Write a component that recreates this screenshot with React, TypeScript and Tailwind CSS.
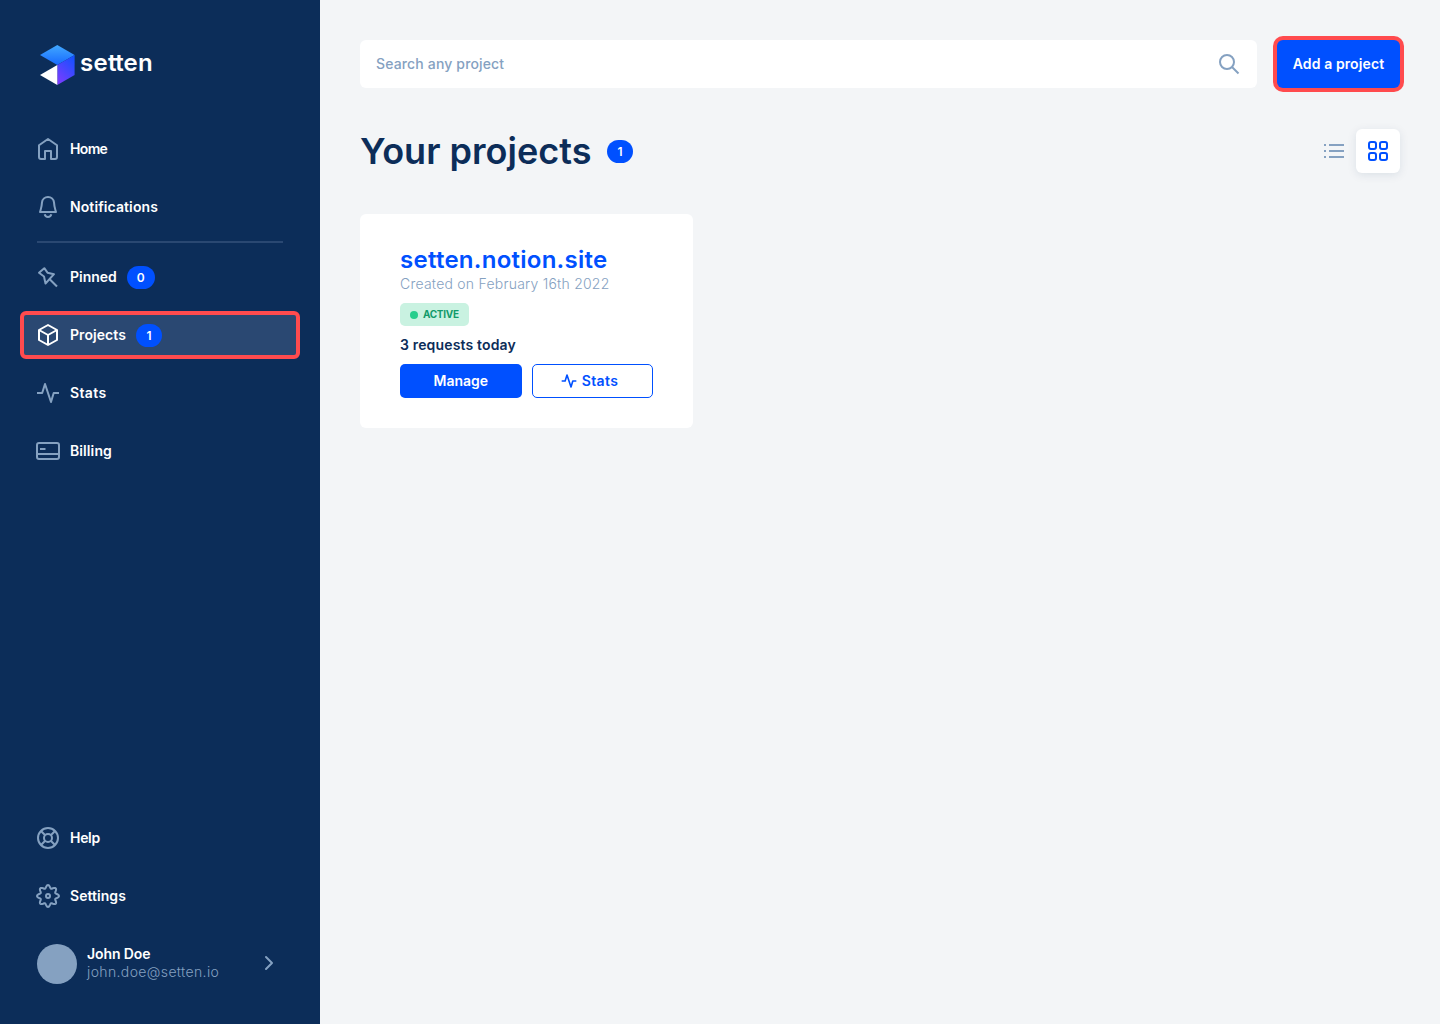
import type { ReactNode } from "react";

type IconProps = { children: ReactNode; className?: string; width?: number };

function Icon({ children, className = "size-6", width = 2 }: IconProps) {
  return (
    <svg
      viewBox="0 0 24 24"
      fill="none"
      stroke="currentColor"
      strokeWidth={width}
      strokeLinejoin="round"
      className={`shrink-0 ${className}`}
    >
      {children}
    </svg>
  );
}

// Outline of an eight-lobed cog, centred in a 24 unit box.
const cogOutline = Array.from({ length: 144 }, (_, i) => {
  const angle = (i / 144) * Math.PI * 2;
  const radius = 9.4 + 1.55 * Math.cos(8 * angle);
  return `${(12 + radius * Math.cos(angle)).toFixed(2)},${(12 + radius * Math.sin(angle)).toFixed(2)}`;
}).join(" ");

const home = <path d="M3 8.3 12 2l9 6.3V20a2 2 0 0 1-2 2h-4v-8H9v8H5a2 2 0 0 1-2-2z" />;
const bell = (
  <>
    <path d="M12 2a6 6 0 0 0-6 5.400C5.700 12.600 4.800 14 4 17h16c-.8-3-1.700-4.400-2-9.600A6 6 0 0 0 12 2z" />
    <path d="M8.700 19.300c.4 1.800 1.700 2.700 3.300 2.700s2.900-.9 3.300-2.700" />
  </>
);
const pin = (
  <>
    <path d="M3 7.800 8.300 3.200l3.200 4.500 6.500 1.500-8.500 9.300L8 11.500z" />
    <path d="m13.700 14.200 7.300 7.300" />
  </>
);
const cube = (
  <>
    <path d="m12 2 9 5v10l-9 5-9-5V7z" />
    <path d="m3 7 9 5 9-5M12 12v10" />
  </>
);
const pulse = <path d="M1 12h5.200L9 3l6 18 2.700-9H23" />;
const card = (
  <>
    <rect x="1" y="4" width="22" height="16" rx="2" />
    <path d="M1 15h22M4 10h5.500" />
  </>
);
const lifebuoy = (
  <>
    <circle cx="12" cy="12" r="10" />
    <circle cx="12" cy="12" r="4" />
    <path d="m5 5 4.200 4.200M14.800 9.200 19 5M14.800 14.800 19 19M9.200 14.800 5 19" />
  </>
);
const gear = (
  <>
    <circle cx="12" cy="12" r="2" />
    <polygon points={cogOutline} />
  </>
);

function Count({ value, className }: { value: number; className: string }) {
  return (
    <span
      className={`flex h-[23px] items-center justify-center rounded-full bg-[#0050ff] pt-px text-[12px] font-semibold text-white ${className}`}
    >
      {value}
    </span>
  );
}

type NavItemProps = {
  icon: ReactNode;
  label: string;
  tracking: string;
  active?: boolean;
  badge?: ReactNode;
};

function NavItem({ icon, label, tracking, active, badge }: NavItemProps) {
  return (
    <a
      className={`flex h-12 items-center gap-2.5 rounded-md border-4 px-3 ${
        active ? "border-[#ff4b4e] bg-[#2a4872]" : "border-transparent"
      }`}
    >
      <Icon className={active ? "size-6 text-white" : "size-6 text-[#85a1c1]"}>{icon}</Icon>
      <span className={`whitespace-nowrap pb-px text-[14px] font-semibold text-white ${tracking}`}>{label}</span>
      {badge}
    </a>
  );
}

function Logo() {
  return (
    <div className="ml-10 flex h-10 items-center gap-[5px]">
      <svg viewBox="0 0 35 40" className="h-10 w-[35px]">
        <defs>
          <linearGradient id="top" x1="0" y1="0" x2="0" y2="1">
            <stop offset="0" stopColor="#41a8ff" />
            <stop offset="1" stopColor="#1769ff" />
          </linearGradient>
          <linearGradient id="side" x1="0.8" y1="0" x2="0.2" y2="1">
            <stop offset="0" stopColor="#1450ff" />
            <stop offset="1" stopColor="#7b3cff" />
          </linearGradient>
        </defs>
        <path d="M17.300 0 34.600 10 17.300 20 0 10z" fill="url(#top)" />
        <path d="M34.600 10v20L17.300 40V20z" fill="url(#side)" />
        <path d="M17.300 20v20L0 30z" fill="#fff" />
      </svg>
      <span className="pb-1 text-[24px] font-semibold leading-none tracking-[0.3px] text-white">
        se<span className="tracking-[-0.4px]">tt</span>en
      </span>
    </div>
  );
}

export default function App() {
  return (
    <div className="flex h-screen w-full overflow-hidden bg-[#f3f5f7] font-['Inter','Noto_Sans',sans-serif] text-[#0c2d59]">
      <aside className="flex w-80 shrink-0 flex-col bg-[#0c2d59] pb-10 pt-[45px]">
        <Logo />
        <nav className="mt-10 flex flex-col gap-2.5 px-5">
          <NavItem icon={home} label="Home" tracking="tracking-[-0.65px]" />
          <NavItem icon={bell} label="Notifications" tracking="tracking-[0.1px]" />
          <hr className="mx-[17px] h-0.5 border-0 bg-[#2a4872]" />
          <NavItem
            icon={pin}
            label="Pinned"
            tracking="tracking-[-0.03px]"
            badge={<Count value={0} className="w-7" />}
          />
          <NavItem
            icon={cube}
            label="Projects"
            tracking="tracking-[0.07px]"
            active
            badge={<Count value={1} className="w-[26px]" />}
          />
          <NavItem icon={pulse} label="Stats" tracking="tracking-[0.35px]" />
          <NavItem icon={card} label="Billing" tracking="tracking-[0.1px]" />
        </nav>
        <div className="mt-auto flex flex-col gap-2.5 px-5">
          <NavItem icon={lifebuoy} label="Help" tracking="tracking-[-0.3px]" />
          <NavItem icon={gear} label="Settings" tracking="tracking-[0.05px]" />
        </div>
        <div className="mt-6 flex h-10 items-center pl-[37px] pr-[39px]">
          <div className="size-10 shrink-0 rounded-full bg-[#85a1c1]" />
          <div className="ml-2.5 flex-1 whitespace-nowrap pb-0.5 text-[14px] leading-[18px]">
            <p className="font-semibold tracking-[-0.1px] text-white">John Doe</p>
            <p className="font-light tracking-[0.37px] text-[#85a1c1]">john.doe@setten.io</p>
          </div>
          <Icon className="relative -top-px size-6 text-[#85a1c1]">
            <path d="m9 6 6 6-6 6" strokeLinecap="round" />
          </Icon>
        </div>
      </aside>

      <main className="flex flex-1 flex-col p-10">
        <div className="flex h-12 gap-5">
          <label className="flex flex-1 items-center rounded-md bg-white px-4">
            <input
              placeholder="Search any project"
              className="flex-1 pb-px text-[14px] font-medium tracking-[0.15px] outline-none placeholder:text-[#85a1c1]"
            />
            <Icon className="size-6 text-[#85a1c1]">
              <circle cx="10" cy="10" r="7" />
              <path d="m15 15 6.500 6.500" />
            </Icon>
          </label>
          <button className="w-[123px] whitespace-nowrap rounded-md bg-[#0050ff] pb-px text-[14px] font-semibold tracking-[0.1px] text-white ring-4 ring-[#ff4b4e]">
            Add a project
          </button>
        </div>

        <header className="mt-[41px] flex h-11 items-center">
          <h1 className="w-[231px] whitespace-nowrap text-[36px] font-semibold leading-none tracking-[0.02px]">
            Your projects
          </h1>
          <Count value={1} className="ml-4 w-[26px]" />
          <div className="ml-auto flex items-center">
            <svg viewBox="0 0 20 14" className="h-3.5 w-5 text-[#85a1c1]" stroke="currentColor" strokeWidth="2">
              <path d="M0 1h2M5 1h15M0 7h2M5 7h15M0 13h2M5 13h15" />
            </svg>
            <button className="ml-3 flex size-11 items-center justify-center rounded-md bg-white text-[#0050ff] shadow-[0_2px_10px_rgba(12,45,89,0.10)]">
              <svg viewBox="0 0 20 20" className="size-5" fill="none" stroke="currentColor" strokeWidth="2">
                <rect x="1" y="1" width="7" height="7" rx="2" />
                <rect x="12" y="1" width="7" height="7" rx="2" />
                <rect x="1" y="12" width="7" height="7" rx="2" />
                <rect x="12" y="12" width="7" height="7" rx="2" />
              </svg>
            </button>
          </div>
        </header>

        <section className="mt-[41px] grid grid-cols-3 gap-5">
          <article className="flex h-[214px] flex-col items-start rounded-md bg-white px-10 pt-[31px]">
            <h2 className="whitespace-nowrap text-[24px] font-semibold leading-[30px] tracking-[0.26px] text-[#0050ff]">
              setten.notion.site
            </h2>
            <p className="whitespace-nowrap text-[14px] font-light leading-[18px] tracking-[0.23px] text-[#85a1c1]">
              Created on February 16th 2022
            </p>
            <span className="mt-2.5 flex h-[23px] w-[69px] items-center rounded-[5px] bg-[#c9f2e1] pl-2.5 text-[10px] font-bold tracking-[-0.3px] text-[#129a6b]">
              <span className="mr-[5px] size-2 rounded-full bg-[#27ce8d]" />
              ACTIVE
            </span>
            <p className="mt-2.5 text-[14px] font-semibold leading-[18px] tracking-[0.16px]">3 requests today</p>
            <div className="mt-2.5 grid h-[34px] w-full grid-cols-2 gap-2.5 text-[14px] font-semibold">
              <button className="rounded-[5px] bg-[#0050ff] pb-px text-white">Manage</button>
              <button className="flex items-center justify-center gap-[5px] rounded-[5px] border border-[#0050ff] pr-1.5 text-[#0050ff]">
                <Icon className="size-4" width={2.4}>
                  {pulse}
                </Icon>
                <span className="pb-px tracking-[0.35px]">Stats</span>
              </button>
            </div>
          </article>
        </section>
      </main>
    </div>
  );
}
